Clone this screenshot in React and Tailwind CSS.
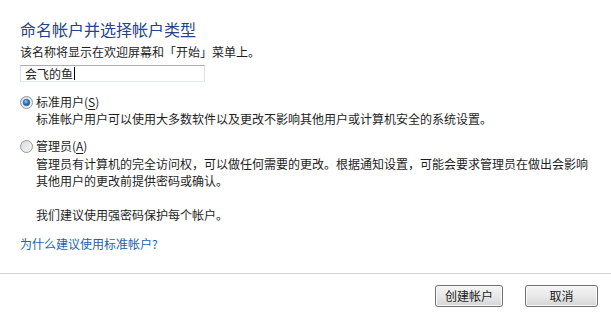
import React from "react";

const font = { fontFamily: '"Noto Sans CJK SC", "Microsoft YaHei", sans-serif' };

function Radio({ checked }) {
  return (
    <svg width="13" height="13" viewBox="0 0 13 13" className="shrink-0">
      <defs>
        <linearGradient id={checked ? "rbgc" : "rbgu"} x1="0" y1="0" x2="1" y2="1">
          <stop offset="0" stopColor="#d4d6d9" />
          <stop offset="1" stopColor="#fbfbfb" />
        </linearGradient>
        <radialGradient id="rdot" cx="0.4" cy="0.35" r="0.7">
          <stop offset="0" stopColor="#8fd0f5" />
          <stop offset="0.5" stopColor="#2e7fbf" />
          <stop offset="1" stopColor="#184a82" />
        </radialGradient>
      </defs>
      <circle cx="6.5" cy="6.5" r="6" fill={`url(#${checked ? "rbgc" : "rbgu"})`} stroke="#8e9aa6" strokeWidth="1" />
      {checked && <circle cx="6.5" cy="6.5" r="3.3" fill="url(#rdot)" stroke="#2a5a8f" strokeWidth="0.6" />}
    </svg>
  );
}

function Button({ children, w }) {
  return (
    <button
      className={`${w} h-[22px] rounded-[3px] border border-[#707070] bg-gradient-to-b from-[#f4f4f4] via-[#e9e9e9] to-[#d5d5d5] text-[12px] text-[#1a1a1a] shadow-[inset_0_0_0_1px_#fcfcfc] flex items-center justify-center`}
      style={font}
    >
      {children}
    </button>
  );
}

export default function App() {
  return (
    <div className="w-[611px] h-[319px] bg-white flex flex-col text-[12px] text-[#1e1e1e] overflow-hidden" style={font}>
      <div className="pl-[20px] flex flex-col">
        <div className="pt-[19px] text-[16px] leading-[20px] text-[#24438c]">命名帐户并选择帐户类型</div>
        <div className="mt-[5px] leading-[16px] whitespace-nowrap">该名称将显示在欢迎屏幕和「开始」菜单上。</div>
        <div className="mt-[5px] w-[185px] h-[17px] border border-t-[#abadb3] border-x-[#dbdfe6] border-b-[#e3e9ef] flex items-center pl-[4px]">
          <span className="leading-[15px]">会飞的鱼</span>
          <span className="w-px h-[13px] bg-black ml-px" />
        </div>

        <div className="mt-[12px] flex items-center gap-[3px] leading-[16px]">
          <Radio checked />
          <span>
            标准用户(<span className="underline underline-offset-2">S</span>)
          </span>
        </div>
        <div className="mt-px pl-[16px] leading-[16px] whitespace-nowrap">
          标准帐户用户可以使用大多数软件以及更改不影响其他用户或计算机安全的系统设置。
        </div>

        <div className="mt-[11px] flex items-center gap-[3px] leading-[16px]">
          <Radio />
          <span>
            管理员(<span className="underline underline-offset-2">A</span>)
          </span>
        </div>
        <div className="mt-px pl-[16px] leading-[17px] whitespace-nowrap">
          <div>管理员有计算机的完全访问权，可以做任何需要的更改。根据通知设置，可能会要求管理员在做出会影响</div>
          <div>其他用户的更改前提供密码或确认。</div>
        </div>

        <div className="mt-[18px] pl-[16px] leading-[16px]">我们建议使用强密码保护每个帐户。</div>
        <div className="mt-[13px] leading-[16px] text-[#2262ad]">为什么建议使用标准帐户?</div>
      </div>

      <div className="mt-[21px] h-px bg-[#d4d4d4]" />

      <div className="mt-[11px] flex justify-end gap-[22px] pr-[13px]">
        <Button w="w-[68px]">创建帐户</Button>
        <Button w="w-[73px]">取消</Button>
      </div>
    </div>
  );
}
